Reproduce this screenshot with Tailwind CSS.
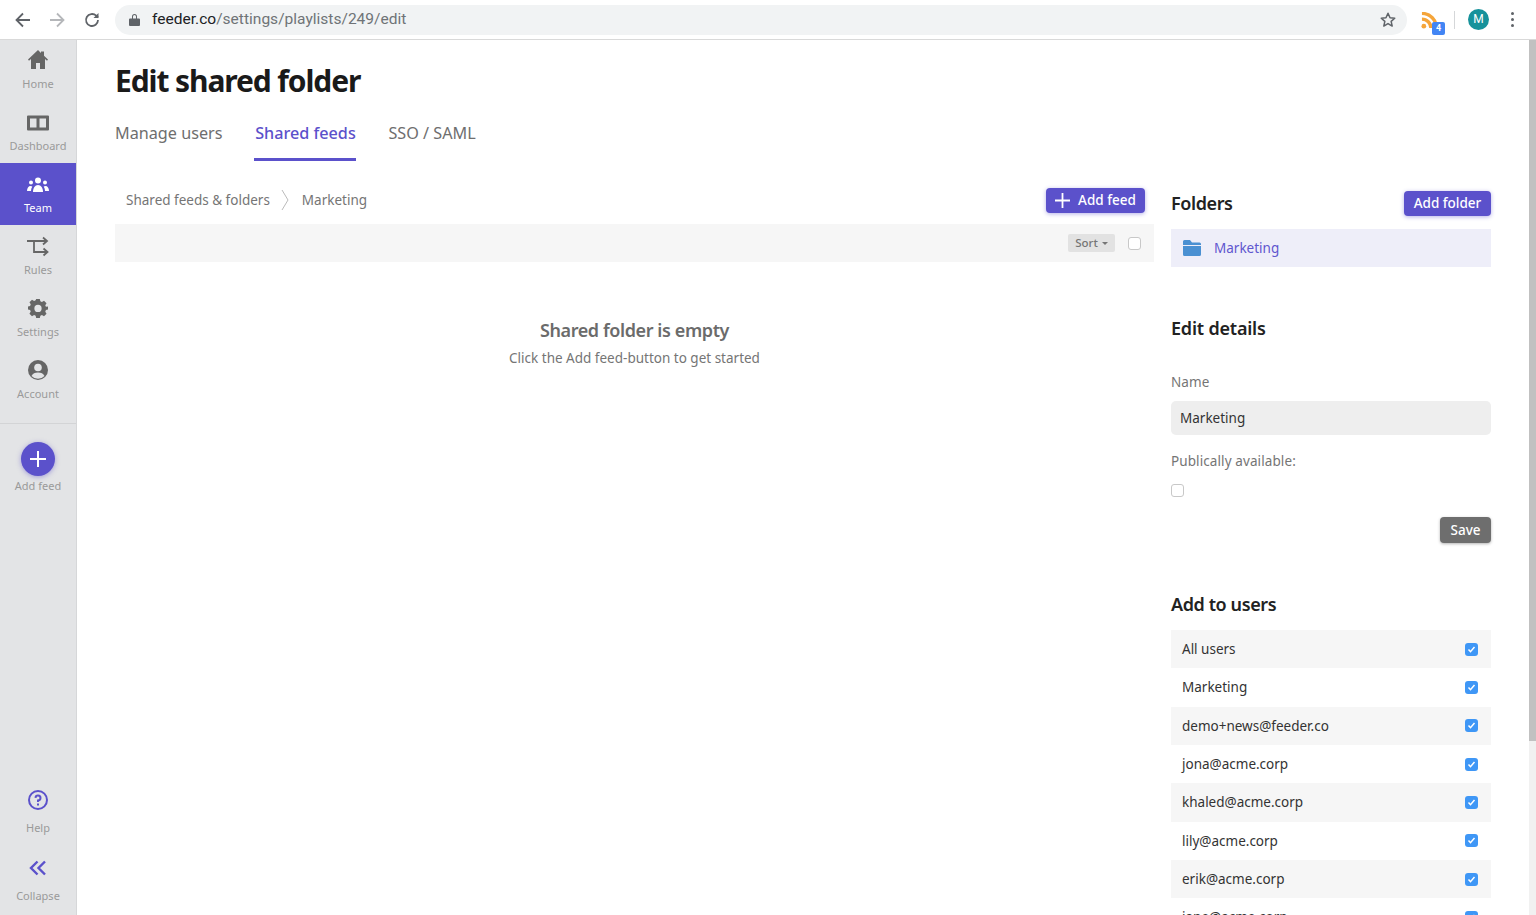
<!DOCTYPE html>
<html lang="en">
<head>
  <meta charset="UTF-8" />
  <meta name="viewport" content="width=device-width, initial-scale=1.0" />
  <title>Edit shared folder</title>
  <script src="https://cdn.jsdelivr.net/npm/@tailwindcss/browser@4"></script>
</head>
<body class="h-[915px] overflow-hidden bg-white font-['Noto_Sans',sans-serif] text-[#333]">
  <!-- browser toolbar -->
  <header class="h-10 flex items-center border-b border-[#d9d9d9] bg-white">
    <div class="w-[115px] shrink-0 flex items-center pl-[14px] gap-[16px]">
      <svg class="w-[18px] h-[18px]" viewBox="0 0 18 18" fill="none" stroke="#5f6368" stroke-width="1.8"><path d="M16 9H3M9 2.5 2.5 9 9 15.5"/></svg>
      <svg class="w-[18px] h-[18px]" viewBox="0 0 18 18" fill="none" stroke="#b5b7ba" stroke-width="1.8"><path d="M2 9h13M9 2.5 15.5 9 9 15.500"/></svg>
      <svg class="w-[18px] h-[18px] ml-px" viewBox="0 0 18 18" fill="none" stroke="#5f6368" stroke-width="1.8"><path d="M15 9a6 6 0 1 1-1.8-4.3L15 6.5"/><path d="M15.500 2v5h-5" fill="#5f6368" stroke="none"/></svg>
    </div>
    <div class="w-[1292px] h-[30px] rounded-full bg-[#f1f3f4] flex items-center pl-[14px] pr-[10px] font-['Roboto',sans-serif] text-[15.55px]">
      <svg class="w-[11px] h-[13px] mr-[12px]" viewBox="0 0 11 13" fill="#5f6368"><path d="M1 5.500h9a1 1 0 0 1 1 1V12a1 1 0 0 1-1 1H1a1 1 0 0 1-1-1V6.500a1 1 0 0 1 1-1ZM3 5.500V3.500a2.500 2.500 0 0 1 5 0v2H7V3.500a1.500 1.500 0 0 0-3 0v2Z"/></svg>
      <span class="text-[#202124]">feeder.co</span><span class="text-[#6f7377]">/settings/playlists/249/edit</span>
      <svg class="w-[18px] h-[18px] ml-auto" viewBox="0 0 24 24" fill="none" stroke="#5f6368" stroke-width="2" stroke-linejoin="round"><path d="m12 3 2.700 6 6.300.6-4.800 4.200 1.400 6.300L12 16.800 6.400 20.100l1.400-6.300L3 9.600 9.300 9Z"/></svg>
    </div>
    <div class="relative ml-[14px] mt-[6px] w-[24px] h-[24px]">
      <svg class="mt-px w-[17px] h-[17px]" viewBox="0 1.500 18 18" fill="none" stroke="#f5a53a" stroke-width="3.600"><circle cx="3" cy="16.500" r="2.500" fill="#f5a53a" stroke="none"/><path d="M1 9a9.500 9.500 0 0 1 9.500 9.500"/><path d="M1 3a15.500 15.500 0 0 1 15.500 15.500"/></svg>
      <span class="absolute right-0 bottom-0 w-[13px] h-[13px] rounded-[2px] bg-[#4285f4] text-white font-['Roboto',sans-serif] font-bold text-[9px] leading-[13px] text-center">4</span>
    </div>
    <div class="w-px h-[18px] bg-[#d5d7d9] ml-[9px]"></div>
    <div class="ml-[13px] w-[21px] h-[21px] rounded-full bg-[#17929b] text-white font-['Roboto',sans-serif] text-[12px] leading-[21px] text-center">M</div>
    <div class="ml-[22px] flex flex-col gap-[3px]">
      <span class="w-[3px] h-[3px] rounded-full bg-[#5f6368]"></span>
      <span class="w-[3px] h-[3px] rounded-full bg-[#5f6368]"></span>
      <span class="w-[3px] h-[3px] rounded-full bg-[#5f6368]"></span>
    </div>
  </header>

  <div class="relative flex h-[875px]">
    <!-- sidebar -->
    <aside class="w-[77px] shrink-0 bg-[#e3e4e6] border-r border-[#d6d7d9] flex flex-col text-[11px] text-[#9a9a9a]">
      <a class="h-[62px] flex flex-col items-center pt-[9px]">
        <svg class="w-[22px] h-[22px]" viewBox="0 0 22 22" fill="#666"><path d="M11 1 1 10.500l1 1.200L4 10v10h5v-6h4v6h5V10l2 1.700 1-1.200-4-3.800V2.500h-3v1.400Z"/></svg>
        <span class="mt-[5px] leading-[16px]">Home</span>
      </a>
      <a class="h-[61px] flex flex-col items-center pt-[10px]">
        <svg class="w-[22px] h-[22px]" viewBox="0 0 22 22" fill="#666"><path fill-rule="evenodd" d="M1 3.500h20a1 1 0 0 1 1 1v13a1 1 0 0 1-1 1H1a1 1 0 0 1-1-1v-13a1 1 0 0 1 1-1ZM3 6.500v9h6.500v-9Zm9.500 0v9H19v-9Z"/></svg>
        <span class="mt-[4px] leading-[16px]">Dashboard</span>
      </a>
      <a class="h-[62px] flex flex-col items-center pt-[12px] bg-[#5b51cb] text-white">
        <svg class="w-[22px] h-[22px]" viewBox="0 0 22 22" fill="#fff"><circle cx="11" cy="5.500" r="3"/><circle cx="4" cy="7.500" r="2"/><circle cx="18" cy="7.500" r="2"/><path d="M6 17c0-4 2-7 5-7s5 3 5 7Z"/><path d="M0 16c0-3 1.500-5 3.500-5 .8 0 1.300.2 1.800.6C4.400 13 4 14.500 4 16Zm22 0c0-3-1.500-5-3.500-5-.8 0-1.300.2-1.800.6.900 1.400 1.300 2.900 1.300 4.400Z"/></svg>
        <span class="mt-[3px] leading-[16px]">Team</span>
      </a>
      <a class="h-[62px] flex flex-col items-center pt-[11px]">
        <svg class="w-[22px] h-[22px]" viewBox="0 0 22 22" fill="none" stroke="#666" stroke-width="1.800"><path d="M0 5h19M16 1.500 20 5l-4 3.500M7 5v11h13M16.500 12.500l4 3.500-4 3.500"/></svg>
        <span class="mt-[4px] leading-[16px]">Rules</span>
      </a>
      <a class="h-[62px] flex flex-col items-center pt-[11px]">
        <svg class="w-[20px] h-[20px]" viewBox="0 0 22 22" fill="#666"><path fill-rule="evenodd" d="M9 1h4l.6 2.600 1.700.7 2.300-1.400 2.800 2.800-1.400 2.300.7 1.700L22 9.300v3.400l-2.300.6-.7 1.700 1.400 2.300-2.800 2.800-2.300-1.400-1.700.7L13 22H9l-.6-2.600-1.700-.7-2.300 1.400-2.800-2.800L3 14.900l-.7-1.700L0 12.700V9.300l2.300-.6.700-1.700-1.400-2.300 2.800-2.800 2.300 1.400 1.700-.7ZM11 7.500a4 4 0 1 0 0 8 4 4 0 0 0 0-8Z"/></svg>
        <span class="mt-[6px] leading-[16px]">Settings</span>
      </a>
      <a class="h-[62px] flex flex-col items-center pt-[10px]">
        <svg class="w-[22px] h-[22px]" viewBox="0 0 22 22"><circle cx="11" cy="11" r="10" fill="#666"/><circle cx="11" cy="8.500" r="3.800" fill="#e3e4e6"/><path d="M4.500 17c1-2.500 3.500-3.500 6.500-3.500s5.500 1 6.500 3.500a9 9 0 0 1-13 0Z" fill="#e3e4e6"/></svg>
        <span class="mt-[5px] leading-[16px]">Account</span>
      </a>
      <div class="mt-[12px] border-t border-[#d3d4d6]"></div>
      <a class="flex flex-col items-center pt-[18px]">
        <span class="w-[34px] h-[34px] rounded-full bg-[#5b51cb] flex items-center justify-center shadow-[0_1px_5px_rgba(91,81,203,0.5)]">
          <svg class="w-[18px] h-[18px]" viewBox="0 0 18 18" stroke="#fff" stroke-width="2"><path d="M9 1v16M1 9h16"/></svg>
        </span>
        <span class="mt-[2px] leading-[16px]">Add feed</span>
      </a>
      <a class="mt-auto flex flex-col items-center">
        <svg class="w-[20px] h-[20px]" viewBox="0 0 20 20" fill="none" stroke="#5b51cb" stroke-width="2"><circle cx="10" cy="10" r="9"/><path d="M7.500 7.800A2.500 2.500 0 1 1 10 10.500v1.500"/><path d="M10 13.500v2"/></svg>
        <span class="mt-[10px] leading-[16px]">Help</span>
      </a>
      <a class="mt-[24px] mb-[11px] flex flex-col items-center">
        <svg class="w-[18px] h-[16px]" viewBox="0 0 18 16" fill="none" stroke="#5b51cb" stroke-width="2.400"><path d="M8.500 1.500 2 8l6.500 6.500M16 1.500 9.500 8l6.500 6.500"/></svg>
        <span class="mt-[12px] leading-[16px]">Collapse</span>
      </a>
    </aside>

    <!-- page -->
    <main class="flex-1 pl-[38px] overflow-hidden">
      <h1 class="mt-[21px] text-[30px] leading-[40px] font-bold text-[#1a1a1a] tracking-[-1.1px]">Edit shared folder</h1>
      <nav class="mt-[20px] flex gap-[32px] text-[16.2px] text-[#6e6e6e] h-[40px]">
        <a class="leading-[24px]">Manage users</a>
        <a class="leading-[24px] w-[102px] text-center whitespace-nowrap font-medium text-[#5b51cb] border-b-[3px] border-[#5b51cb]">Shared feeds</a>
        <a class="leading-[24px]">SSO / SAML</a>
      </nav>

      <div class="flex gap-[17px]">
        <!-- left column -->
        <section class="w-[1039px] shrink-0">
          <div class="mt-[26px] h-[26px] flex items-center pl-[11px] text-[13.5px] text-[#757575]">
            <span class="pt-px">Shared feeds &amp; folders</span>
            <svg class="w-[8px] h-[22px] ml-[11px] mr-[13px]" viewBox="0 0 8 22" fill="none" stroke="#bbb"><path d="m1 1 6 10-6 10"/></svg>
            <span class="pt-px">Marketing</span>
            <button class="ml-auto mr-[9px] w-[99px] h-[25px] rounded-[4px] bg-[#5b51cb] text-white text-[13.5px] font-medium flex items-center justify-center gap-[8px] shadow-[0_1px_4px_rgba(91,81,203,0.45)]">
              <svg class="w-[15px] h-[15px]" viewBox="0 0 15 15" stroke="#fff" stroke-width="1.800"><path d="M7.500 0v15M0 7.500h15"/></svg>Add feed
            </button>
          </div>
          <div class="mt-[11px] h-[38px] bg-[#f6f6f6] flex items-center justify-end pr-[13px]">
            <span class="w-[47px] h-[18px] rounded-[2px] bg-[#e2e2e2] text-[#757575] text-[11.500px] font-medium flex items-center justify-center gap-[4px]">Sort<i class="border-x-[3px] border-t-[3px] border-x-transparent border-t-[#757575]"></i></span>
            <span class="ml-[13px] w-[13px] h-[13px] rounded-[3px] border border-[#c8c8c8] bg-white"></span>
          </div>
          <div class="mt-[54px] text-center">
            <h3 class="text-[18px] leading-[28px] font-semibold text-[#6b6b6b] tracking-[-0.4px]">Shared folder is empty</h3>
            <p class="text-[13.5px] leading-[28px] text-[#757575]">Click the Add feed-button to get started</p>
          </div>
        </section>

        <!-- right column -->
        <section class="w-[320px] shrink-0">
          <div class="mt-[30px] h-[25px] flex items-center justify-between">
            <h2 class="text-[18px] font-semibold text-[#222] tracking-[-0.4px]">Folders</h2>
            <button class="w-[87px] h-[25px] rounded-[4px] bg-[#5b51cb] text-white text-[13.5px] font-medium shadow-[0_1px_4px_rgba(91,81,203,0.45)]">Add folder</button>
          </div>
          <div class="mt-[13px] h-[38px] bg-[#eeeef9] flex items-center pl-[12px] text-[13.5px] text-[#5f56cf]">
            <svg class="w-[18px] h-[16px] mr-[13px]" viewBox="0 0 18 16" fill="#4a90d2"><path d="M1.500 0H7l2 2.500h7.500A1.500 1.500 0 0 1 18 4v1H0V1.500A1.500 1.500 0 0 1 1.500 0ZM0 6h18v8.500a1.500 1.500 0 0 1-1.500 1.500h-15A1.500 1.500 0 0 1 0 14.500Z"/></svg>
            Marketing
          </div>

          <h2 class="mt-[47px] text-[18px] leading-[28px] font-semibold text-[#222] tracking-[-0.2px]">Edit details</h2>
          <label class="block mt-[30px] text-[13.5px] tracking-[0.1px] leading-[20px] text-[#757575]">Name</label>
          <div class="mt-[9px] h-[34px] rounded-[5px] bg-[#eeeeee] pl-[9px] text-[13.5px] leading-[34px] text-[#333]">Marketing</div>
          <label class="block mt-[16px] text-[13.5px] tracking-[0.1px] leading-[20px] text-[#757575]">Publically available:</label>
          <span class="block mt-[13px] w-[13px] h-[13px] rounded-[3px] border border-[#c8c8c8] bg-white"></span>
          <div class="mt-[20px] flex justify-end">
            <button class="w-[51px] h-[26px] rounded-[4px] bg-[#6e6e6e] text-white text-[13.5px] font-medium shadow-[0_1px_3px_rgba(0,0,0,0.3)]">Save</button>
          </div>

          <h2 class="mt-[47px] text-[18px] leading-[28px] font-semibold text-[#222] tracking-[-0.4px]">Add to users</h2>
          <ul class="mt-[12px] text-[13.5px] text-[#333]">
            <li class="h-[38.330px] bg-[#f6f6f6] flex items-center justify-between pl-[11px] pr-[13px]">All users
              <span class="w-[13px] h-[13px] rounded-[3px] bg-[#3f97f6] flex items-center justify-center"><svg class="w-[9px] h-[9px]" viewBox="0 0 9 9" fill="none" stroke="#fff" stroke-width="1.500"><path d="m1.500 4.500 2 2.200 4-4.700"/></svg></span></li>
            <li class="h-[38.330px] flex items-center justify-between pl-[11px] pr-[13px]">Marketing
              <span class="w-[13px] h-[13px] rounded-[3px] bg-[#3f97f6] flex items-center justify-center"><svg class="w-[9px] h-[9px]" viewBox="0 0 9 9" fill="none" stroke="#fff" stroke-width="1.500"><path d="m1.500 4.500 2 2.200 4-4.700"/></svg></span></li>
            <li class="h-[38.330px] bg-[#f6f6f6] flex items-center justify-between pl-[11px] pr-[13px]">demo+news@feeder.co
              <span class="w-[13px] h-[13px] rounded-[3px] bg-[#3f97f6] flex items-center justify-center"><svg class="w-[9px] h-[9px]" viewBox="0 0 9 9" fill="none" stroke="#fff" stroke-width="1.500"><path d="m1.500 4.500 2 2.200 4-4.700"/></svg></span></li>
            <li class="h-[38.330px] flex items-center justify-between pl-[11px] pr-[13px]">jona@acme.corp
              <span class="w-[13px] h-[13px] rounded-[3px] bg-[#3f97f6] flex items-center justify-center"><svg class="w-[9px] h-[9px]" viewBox="0 0 9 9" fill="none" stroke="#fff" stroke-width="1.500"><path d="m1.500 4.500 2 2.200 4-4.700"/></svg></span></li>
            <li class="h-[38.330px] bg-[#f6f6f6] flex items-center justify-between pl-[11px] pr-[13px]">khaled@acme.corp
              <span class="w-[13px] h-[13px] rounded-[3px] bg-[#3f97f6] flex items-center justify-center"><svg class="w-[9px] h-[9px]" viewBox="0 0 9 9" fill="none" stroke="#fff" stroke-width="1.500"><path d="m1.500 4.500 2 2.200 4-4.700"/></svg></span></li>
            <li class="h-[38.330px] flex items-center justify-between pl-[11px] pr-[13px]">lily@acme.corp
              <span class="w-[13px] h-[13px] rounded-[3px] bg-[#3f97f6] flex items-center justify-center"><svg class="w-[9px] h-[9px]" viewBox="0 0 9 9" fill="none" stroke="#fff" stroke-width="1.500"><path d="m1.500 4.500 2 2.200 4-4.700"/></svg></span></li>
            <li class="h-[38.330px] bg-[#f6f6f6] flex items-center justify-between pl-[11px] pr-[13px]">erik@acme.corp
              <span class="w-[13px] h-[13px] rounded-[3px] bg-[#3f97f6] flex items-center justify-center"><svg class="w-[9px] h-[9px]" viewBox="0 0 9 9" fill="none" stroke="#fff" stroke-width="1.500"><path d="m1.500 4.500 2 2.200 4-4.700"/></svg></span></li>
            <li class="h-[38.330px] flex items-center justify-between pl-[11px] pr-[13px]">jane@acme.corp
              <span class="w-[13px] h-[13px] rounded-[3px] bg-[#3f97f6] flex items-center justify-center"><svg class="w-[9px] h-[9px]" viewBox="0 0 9 9" fill="none" stroke="#fff" stroke-width="1.500"><path d="m1.500 4.500 2 2.200 4-4.700"/></svg></span></li>
          </ul>
        </section>
      </div>
    </main>

    <!-- page scrollbar -->
    <div class="absolute top-0 right-0 bottom-0 w-[7px] bg-[#f1f1f1]">
      <div class="h-[701px] bg-[#c1c1c1]"></div>
    </div>
  </div>
</body>
</html>
